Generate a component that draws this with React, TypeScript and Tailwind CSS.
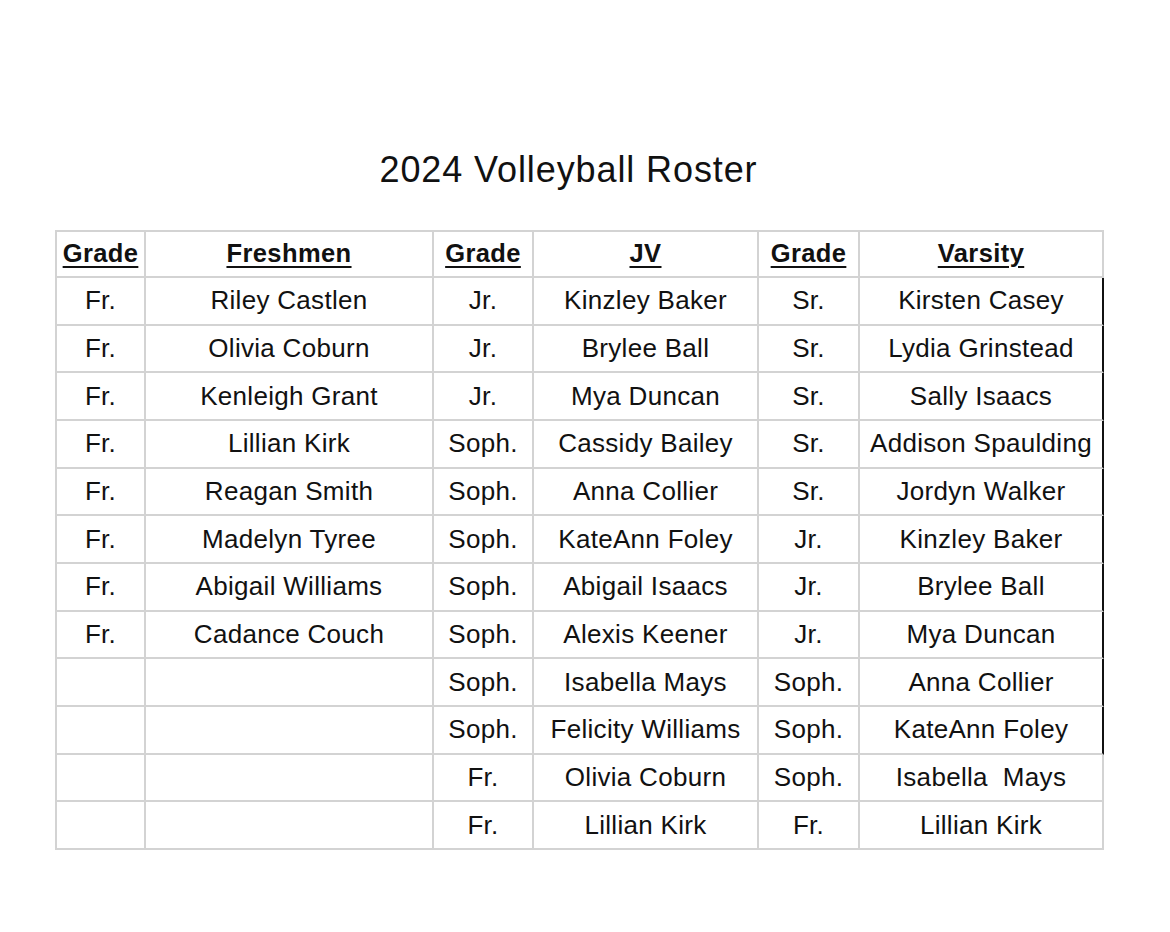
import React from "react";

const headers = ["Grade", "Freshmen", "Grade", "JV", "Grade", "Varsity"];

const rows: string[][] = [
  ["Fr.", "Riley Castlen", "Jr.", "Kinzley Baker", "Sr.", "Kirsten Casey"],
  ["Fr.", "Olivia Coburn", "Jr.", "Brylee Ball", "Sr.", "Lydia Grinstead"],
  ["Fr.", "Kenleigh Grant", "Jr.", "Mya Duncan", "Sr.", "Sally Isaacs"],
  ["Fr.", "Lillian Kirk", "Soph.", "Cassidy Bailey", "Sr.", "Addison Spaulding"],
  ["Fr.", "Reagan Smith", "Soph.", "Anna Collier", "Sr.", "Jordyn Walker"],
  ["Fr.", "Madelyn Tyree", "Soph.", "KateAnn Foley", "Jr.", "Kinzley Baker"],
  ["Fr.", "Abigail Williams", "Soph.", "Abigail Isaacs", "Jr.", "Brylee Ball"],
  ["Fr.", "Cadance Couch", "Soph.", "Alexis Keener", "Jr.", "Mya Duncan"],
  ["", "", "Soph.", "Isabella Mays", "Soph.", "Anna Collier"],
  ["", "", "Soph.", "Felicity Williams", "Soph.", "KateAnn Foley"],
  ["", "", "Fr.", "Olivia Coburn", "Soph.", "Isabella  Mays"],
  ["", "", "Fr.", "Lillian Kirk", "Fr.", "Lillian Kirk"],
];

export default function App() {
  return (
    <div
      className="min-h-[932px] w-[1170px] bg-white text-[#111111] pl-[55px] pt-[152px]"
      style={{ fontFamily: '"Liberation Sans", Arial, sans-serif' }}
    >
      <div className="w-[1049px] pr-[22px] text-center text-[36px] leading-[36px] tracking-[0.9px]">
        2024 Volleyball Roster
      </div>
      <div className="mt-[42px] w-[1049px] grid grid-cols-[89px_288px_100px_225px_101px_244px] border-l-2 border-t-2 border-[#d3d3d3]">
        {headers.map((h, i) => (
          <div
            key={"h" + i}
            className="h-[46px] flex items-center justify-center pb-0.5 border-r-2 border-b-2 border-[#d3d3d3] text-[25.5px] font-bold underline decoration-2 underline-offset-[4px] tracking-[0.4px] whitespace-pre"
          >
            {h}
          </div>
        ))}
        {rows.map((r, ri) =>
          r.map((c, ci) => (
            <div
              key={ri + "-" + ci}
              className={
                "h-[47.67px] flex items-center justify-center border-b-2 text-[26px] tracking-[0.3px] whitespace-pre border-[#d3d3d3] " +
                (ci === 5 && ri < 10
                  ? "border-r-2 border-r-[#111111]"
                  : "border-r-2")
              }
            >
              {c}
            </div>
          ))
        )}
      </div>
    </div>
  );
}
